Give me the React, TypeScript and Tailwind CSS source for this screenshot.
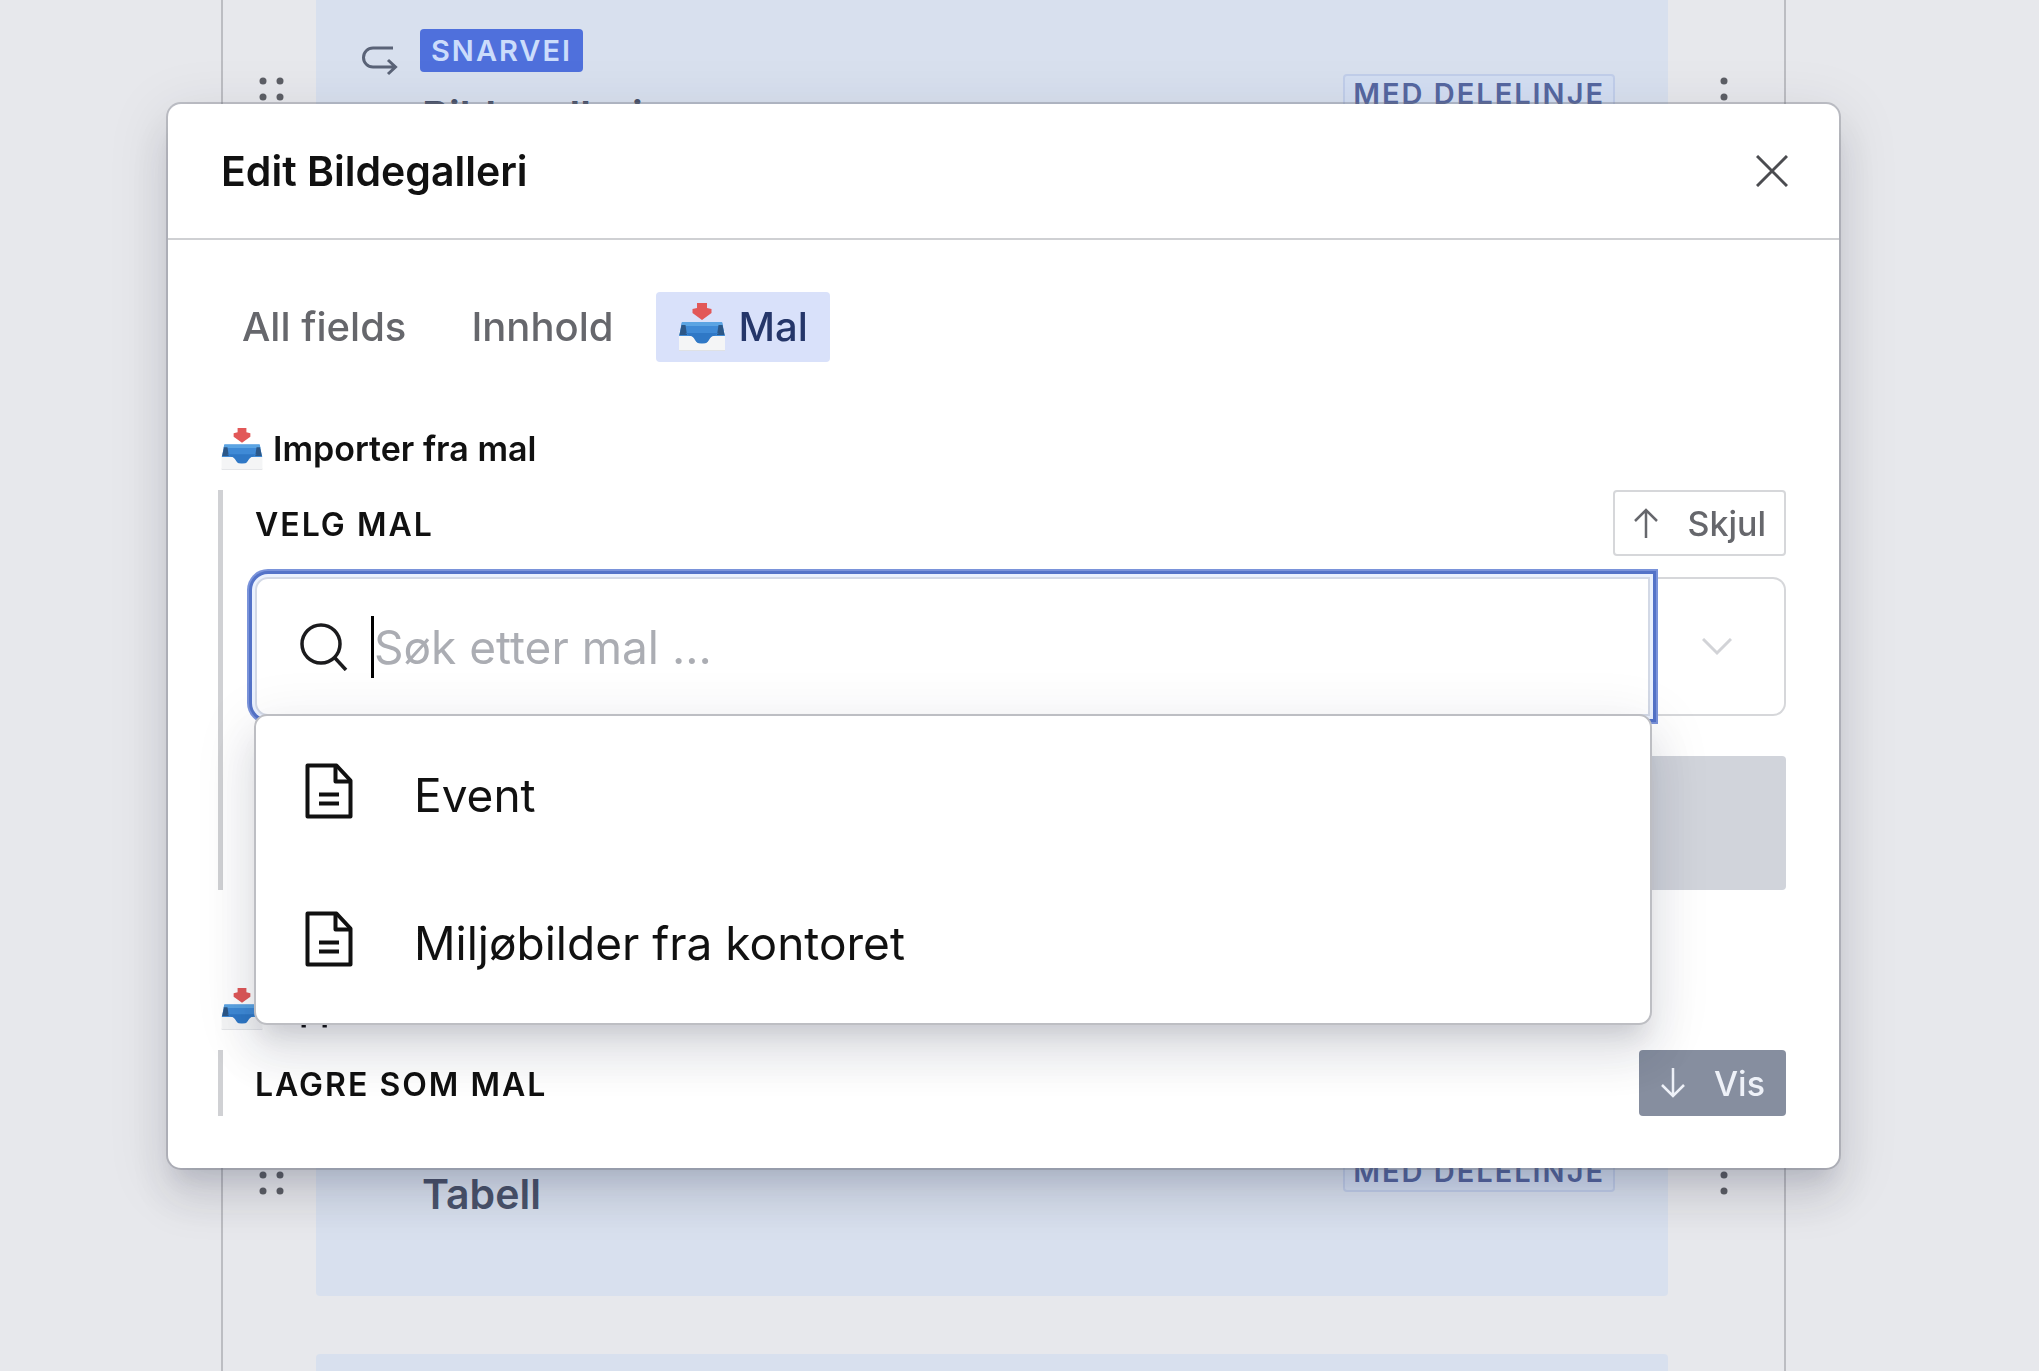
import { useState } from "react";
import type { ReactNode } from "react";

const templates = ["Event", "Miljøbilder fra kontoret"];

const tabs = [
  { id: "all", label: "All fields" },
  { id: "content", label: "Innhold" },
  { id: "template", label: "Mal", emoji: true },
];

function InboxEmoji({ className }: { className?: string }) {
  return (
    <svg viewBox="0 0 48 50" className={className} aria-hidden="true">
      <path d="M1 29h46v19.500H1z" fill="#f3f4f5" />
      <path d="M1 47h46v2H1z" fill="#dfe1e4" />
      <path d="M4 20h40l3 14H34l-5 6.500H19L14 34H1z" fill="#3f8ad6" />
      <path d="M4 20h40l1 4H3z" fill="#5ba4e3" />
      <path d="M3.500 23h4l1.500 10H1.500zM44.500 23h-4L39 33h7.500z" fill="#2c5787" />
      <path d="M7 31h34l-7 4-5 6.500H19L14 35z" fill="#2f78c6" />
      <path d="M1 34h11q3 0 5 4t7 4 7-4 5-4h11v14H1z" fill="#f4f5f6" />
      <path d="M19 1h10v5l4.500 1v4L24 18l-9.500-7V7L19 6z" fill="#e25858" />
    </svg>
  );
}

function DocumentIcon() {
  return (
    <svg viewBox="0 0 48 56" className="mb-2 h-14 w-12 shrink-0" fill="none" stroke="#111" strokeWidth="4" strokeLinejoin="round" aria-hidden="true">
      <path d="M2.500 2.500h29l14 15v36h-43z" />
      <path d="M30.500 2.500v16h15M14 31.500h20M14 40.500h20" />
    </svg>
  );
}

function ArrowIcon({ down }: { down?: boolean }) {
  return (
    <svg viewBox="0 0 26 32" className="h-8 w-[26px]" fill="none" stroke="currentColor" strokeWidth="2.500" aria-hidden="true">
      {down ? <path d="M13 1v28M2 18l11 11 11-11" /> : <path d="M13 31V3M2 14L13 3l11 11" />}
    </svg>
  );
}

function Dots({ columns }: { columns: number[] }) {
  return (
    <svg viewBox="0 0 28 40" className="h-10 w-7" fill="#5d5f66" aria-hidden="true">
      {columns.map((x) => [4, 20, 36].map((y) => <circle key={`${x}-${y}`} cx={x} cy={y} r="3.500" />))}
    </svg>
  );
}

function ContentRow({ title }: { title: string }) {
  return (
    <li className="flex h-[242px]">
      <button type="button" aria-label="Flytt" className="flex w-[93px] items-center pl-[34px]">
        <Dots columns={[6, 23]} />
      </button>
      <div className="flex flex-1 rounded bg-[#d8e0ee] pr-[53px] pl-[46px]">
        <svg viewBox="0 0 36 32" className="mt-[69px] h-8 w-9" fill="none" stroke="#5a6377" strokeWidth="3" aria-hidden="true">
          <path d="M31 3H11a8.500 8.500 0 0 0 0 19h22M26 15l7.500 7-7.500 7" />
        </svg>
        <div className="ml-[22px] flex-1 pt-[53px]">
          <span className="block w-fit rounded bg-[#4f70dc] px-[11px] text-[29px] leading-[43px] font-semibold tracking-[2px] text-[#cbdcfb]">SNARVEI</span>
          <h3 className="mt-5 pl-[2px] text-[41px] leading-[48px] font-semibold text-[#4a536b]">{title}</h3>
        </div>
        <span className="mb-[6px] self-center rounded border-2 border-[#c1ceea] bg-[#d3def2] px-2 text-[29px] leading-9 font-semibold tracking-[2px] text-[#5667a0]">MED DELELINJE</span>
      </div>
      <button type="button" aria-label="Meny" className="flex w-[116px] items-center pl-[42px]">
        <Dots columns={[14]} />
      </button>
    </li>
  );
}

function SectionTitle({ children }: { children: ReactNode }) {
  return (
    <h3 className="flex items-center gap-[9px] pl-[2px] text-[34px] leading-[44px] font-semibold">
      <InboxEmoji className="h-11 w-11" />
      {children}
    </h3>
  );
}

function TemplateSearch() {
  const [query, setQuery] = useState("");

  return (
    <div className="mt-[21px] flex h-[139px]">
      <div className="relative z-10 flex-1">
        <div className="flex h-full items-center rounded-l-[13px] border-2 border-[#d3d9e6] bg-white pl-[43px] shadow-[0_0_0_3px_#eaf1fe,0_0_0_6px_#5473c8,0_0_0_8px_#7a93da]">
          <svg viewBox="0 0 48 48" className="h-12 w-12" fill="none" stroke="#1b1b1d" strokeWidth="3.500" aria-hidden="true">
            <circle cx="21" cy="21" r="19" />
            <path d="M35 35l11 12" />
          </svg>
          <span className="ml-[23px] h-[62px] w-[3px] bg-black" />
          <input
            type="text"
            aria-label="Søk etter mal"
            placeholder="Søk etter mal ..."
            value={query}
            onChange={(e) => setQuery(e.target.value)}
            className="h-full min-w-0 flex-1 bg-transparent text-[46px] caret-transparent outline-none placeholder:text-[#abadb3]"
          />
        </div>
        <ul className="absolute top-[137px] -right-[2px] -left-px rounded-[13px] border-2 border-[#bdbec3] bg-white pt-[5px] pb-[6px] shadow-[0_18px_21px_-10px_rgba(30,35,60,0.12),0_31px_44px_5px_rgba(30,35,60,0.08),0_13px_57px_10px_rgba(30,35,60,0.07)]">
          {templates.map((name) => (
            <li key={name}>
              <button type="button" className="flex h-[148px] w-full items-center gap-[61px] pl-[49px] text-left text-[46px]">
                <DocumentIcon />
                {name}
              </button>
            </li>
          ))}
        </ul>
      </div>
      <button type="button" aria-label="Vis maler" className="flex w-[136px] items-center justify-center rounded-r-[13px] border-2 border-l-0 border-[#d6d7da]">
        <svg viewBox="0 0 30 18" className="h-[18px] w-[30px]" fill="none" stroke="#d2d3d7" strokeWidth="3" aria-hidden="true">
          <path d="M1 1l14 14L29 1" />
        </svg>
      </button>
    </div>
  );
}

function EditDialog() {
  const [active, setActive] = useState("template");

  return (
    <div role="dialog" aria-labelledby="dialog-title" className="rounded-[13px] bg-white shadow-[0_0_0_2px_rgba(110,112,122,0.35),0_18px_21px_-10px_rgba(30,35,60,0.13),0_31px_44px_5px_rgba(30,35,60,0.09),0_13px_57px_10px_rgba(30,35,60,0.08)]">
      <header className="flex h-[136px] items-center justify-between border-b-2 border-[#cfd0d3] pr-[51px] pl-[53px]">
        <h2 id="dialog-title" className="text-[41px] leading-[48px] font-semibold">Edit Bildegalleri</h2>
        <button type="button" aria-label="Lukk">
          <svg viewBox="0 0 32 32" className="size-8" stroke="#4b4c50" strokeWidth="3" aria-hidden="true">
            <path d="M1 1l30 30M31 1L1 31" />
          </svg>
        </button>
      </header>
      <div className="pt-[52px] pr-[53px] pb-[52px] pl-[50px]">
        <div role="tablist" className="flex gap-[21px] pl-[2px]">
          {tabs.map((tab) => (
            <button
              key={tab.id}
              type="button"
              role="tab"
              aria-selected={active === tab.id}
              onClick={() => setActive(tab.id)}
              className={`flex h-[70px] items-center gap-3 rounded px-[22px] text-[40px] font-medium ${active === tab.id ? "bg-[#d9e1fa] text-[#253669]" : "text-[#66676c]"}`}
            >
              {tab.emoji && <InboxEmoji className="h-[50px] w-12" />}
              {tab.label}
            </button>
          ))}
        </div>

        <section className="mt-[65px]">
          <SectionTitle>Importer fra mal</SectionTitle>
          <div className="mt-[19px] border-l-[5px] border-[#d0d1d4] pl-8">
            <div className="flex items-center justify-between">
              <h4 className="pt-1 text-[32px] font-semibold tracking-[2px]">VELG MAL</h4>
              <button type="button" className="flex h-[66px] items-center gap-7 rounded border-2 border-[#d6d7da] px-[18px] text-[34px] font-medium text-[#66676c]">
                <ArrowIcon />
                Skjul
              </button>
            </div>
            <TemplateSearch />
            <button type="button" disabled aria-label="Importer" className="mt-10 block h-[134px] w-full rounded bg-[#d1d4db]" />
          </div>
        </section>

        <section className="mt-[97px]">
          <SectionTitle>Opprett mal</SectionTitle>
          <div className="mt-[19px] flex items-center justify-between border-l-[5px] border-[#d0d1d4] pl-8">
            <h4 className="pt-1 text-[32px] font-semibold tracking-[2px]">LAGRE SOM MAL</h4>
            <button type="button" className="flex h-[66px] items-center gap-7 rounded bg-[#868e9f] px-[21px] text-[34px] font-medium text-[#eef1f8]">
              <ArrowIcon down />
              Vis
            </button>
          </div>
        </section>
      </div>
    </div>
  );
}

export default function App() {
  return (
    <div className="h-screen overflow-hidden bg-[#e7e8ec] font-['Inter',sans-serif] text-[#111]">
      <main className="mr-[253px] ml-[221px] h-full overflow-hidden border-x-2 border-[#bcbdc2]">
        <ul className="-mt-6 flex flex-col gap-[58px]">
          <ContentRow title="Bildegalleri" />
          <li className="h-[720px]" />
          <ContentRow title="Tabell" />
          <li className="mr-[116px] ml-[93px] h-[242px] rounded bg-[#d8e0ee]" />
        </ul>
      </main>
      <div className="fixed inset-0 pt-[104px] pr-[200px] pl-[168px]">
        <EditDialog />
      </div>
    </div>
  );
}
